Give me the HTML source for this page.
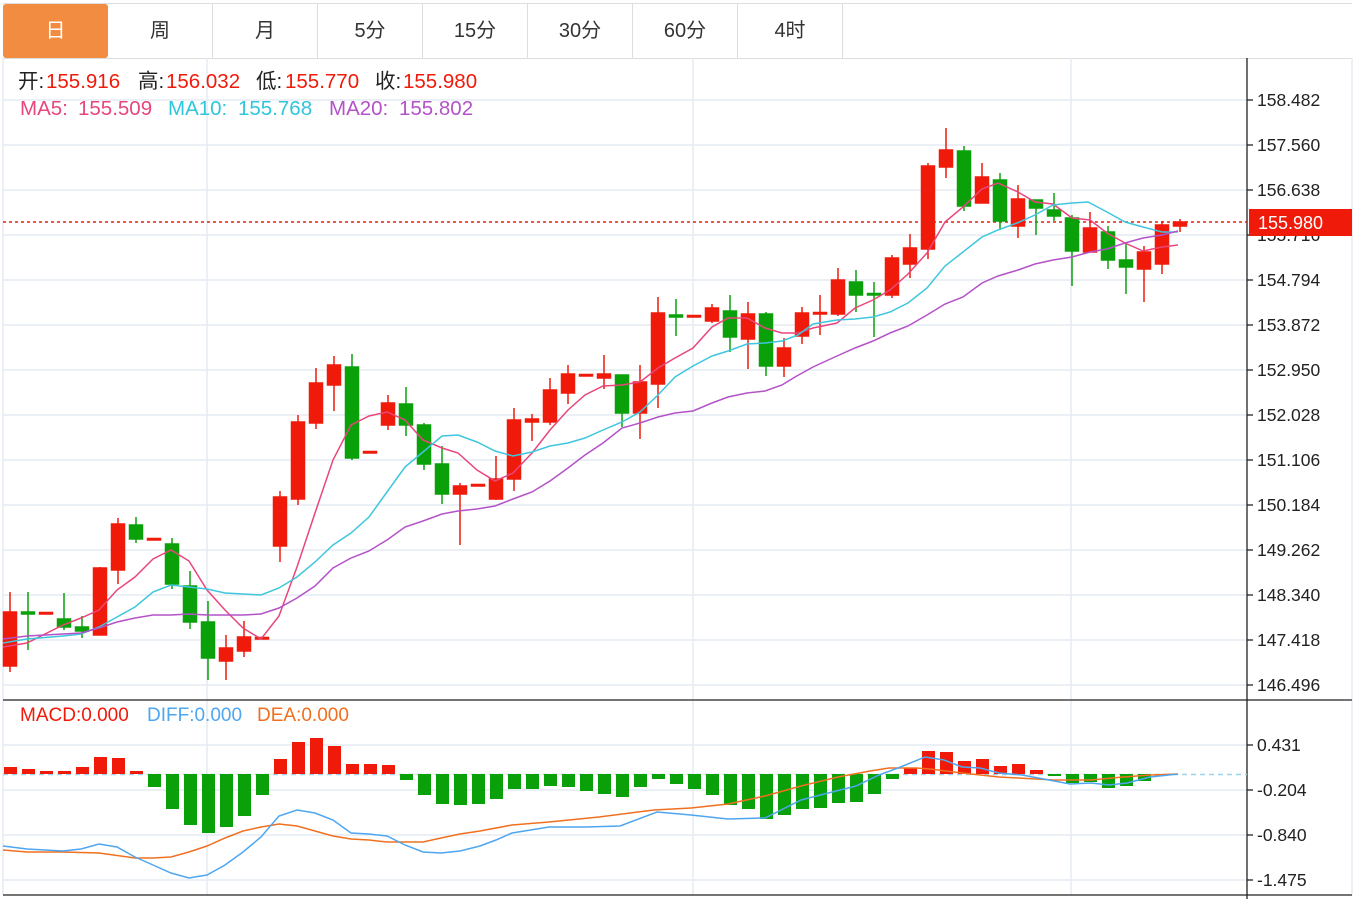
<!DOCTYPE html>
<html><head><meta charset="utf-8"><style>
html,body{margin:0;padding:0;background:#fff;width:1365px;height:899px;overflow:hidden;font-family:"Liberation Sans","Noto Sans CJK SC",sans-serif}
.tabs{position:absolute;left:3px;top:3px;height:54px;width:1349px;border-top:1px solid #ddd;border-bottom:1px solid #ddd}
.tab{position:absolute;top:0;height:54px;width:104px;border-right:1px solid #ddd;text-align:center;line-height:54px;font-size:20px;color:#333}
.tab.on{background:#f28c40;color:#fff;border-radius:3px;border-right:none;width:105px}
.l{position:absolute;font-size:20.5px;white-space:nowrap;line-height:24px}
.r{color:#f01a0a}.k{color:#222}
</style></head><body>
<div class="tabs">
<div class="tab on" style="left:0">日</div>
<div class="tab" style="left:105px">周</div>
<div class="tab" style="left:210px">月</div>
<div class="tab" style="left:315px">5分</div>
<div class="tab" style="left:420px">15分</div>
<div class="tab" style="left:525px">30分</div>
<div class="tab" style="left:630px">60分</div>
<div class="tab" style="left:735px">4时</div>
</div>
<svg style="position:absolute;left:0;top:0" width="1365" height="899" xmlns="http://www.w3.org/2000/svg">
<g stroke="#e4ecf2" stroke-width="1.5">
<line x1="3" x2="1247" y1="100" y2="100"/><line x1="3" x2="1247" y1="145" y2="145"/><line x1="3" x2="1247" y1="190" y2="190"/><line x1="3" x2="1247" y1="235" y2="235"/><line x1="3" x2="1247" y1="280" y2="280"/><line x1="3" x2="1247" y1="325" y2="325"/><line x1="3" x2="1247" y1="370" y2="370"/><line x1="3" x2="1247" y1="415" y2="415"/><line x1="3" x2="1247" y1="460" y2="460"/><line x1="3" x2="1247" y1="505" y2="505"/><line x1="3" x2="1247" y1="550" y2="550"/><line x1="3" x2="1247" y1="595" y2="595"/><line x1="3" x2="1247" y1="640" y2="640"/><line x1="3" x2="1247" y1="685" y2="685"/>
<line x1="3" x2="1247" y1="745" y2="745"/><line x1="3" x2="1247" y1="790" y2="790"/><line x1="3" x2="1247" y1="835" y2="835"/><line x1="3" x2="1247" y1="880" y2="880"/>
<line x1="207" x2="207" y1="58" y2="895"/><line x1="693" x2="693" y1="58" y2="895"/><line x1="1071" x2="1071" y1="58" y2="895"/>
<line x1="3" x2="3" y1="58" y2="895"/><line x1="1352" x2="1352" y1="58" y2="895"/>
</g>
<g stroke="#222" stroke-width="1.3">
<line x1="1247" x2="1247" y1="58" y2="899"/><line x1="3" x2="1352" y1="700" y2="700"/><line x1="3" x2="1352" y1="895" y2="895"/>
<line x1="1247" x2="1253" y1="100" y2="100"/><line x1="1247" x2="1253" y1="145" y2="145"/><line x1="1247" x2="1253" y1="190" y2="190"/><line x1="1247" x2="1253" y1="235" y2="235"/><line x1="1247" x2="1253" y1="280" y2="280"/><line x1="1247" x2="1253" y1="325" y2="325"/><line x1="1247" x2="1253" y1="370" y2="370"/><line x1="1247" x2="1253" y1="415" y2="415"/><line x1="1247" x2="1253" y1="460" y2="460"/><line x1="1247" x2="1253" y1="505" y2="505"/><line x1="1247" x2="1253" y1="550" y2="550"/><line x1="1247" x2="1253" y1="595" y2="595"/><line x1="1247" x2="1253" y1="640" y2="640"/><line x1="1247" x2="1253" y1="685" y2="685"/>
<line x1="1247" x2="1253" y1="745" y2="745"/><line x1="1247" x2="1253" y1="790" y2="790"/><line x1="1247" x2="1253" y1="835" y2="835"/><line x1="1247" x2="1253" y1="880" y2="880"/>
</g>
<g font-family="Liberation Sans,sans-serif" font-size="17.5" fill="#222">
<text x="1257" y="106">158.482</text><text x="1257" y="151">157.560</text><text x="1257" y="196">156.638</text><text x="1257" y="241">155.716</text><text x="1257" y="286">154.794</text><text x="1257" y="331">153.872</text><text x="1257" y="376">152.950</text><text x="1257" y="421">152.028</text><text x="1257" y="466">151.106</text><text x="1257" y="511">150.184</text><text x="1257" y="556">149.262</text><text x="1257" y="601">148.340</text><text x="1257" y="646">147.418</text><text x="1257" y="691">146.496</text>
<text x="1257" y="751">0.431</text><text x="1257" y="796">-0.204</text><text x="1257" y="841">-0.840</text><text x="1257" y="886">-1.475</text>
</g>
<line x1="3" x2="1247" y1="222" y2="222" stroke="#f01a0a" stroke-width="1.5" stroke-dasharray="3,3"/>
<rect x="1249" y="209" width="103" height="27" fill="#f01a0a"/>
<text x="1258" y="229" font-family="Liberation Sans,sans-serif" font-size="18" fill="#fff">155.980</text>
<line x1="3" x2="1247" y1="774.5" y2="774.5" stroke="#9bd4ee" stroke-width="1.5" stroke-dasharray="5,4"/>
<g stroke="#f01a0a" stroke-width="1.5" fill="#f01a0a">
<line x1="10" x2="10" y1="592" y2="672"/><rect x="3.5" y="612" width="13" height="54"/>
<line x1="46" x2="46" y1="613" y2="614"/><rect x="39.5" y="612.5" width="13" height="1.5"/>
<line x1="100" x2="100" y1="567" y2="635"/><rect x="93.5" y="568" width="13" height="67"/>
<line x1="118" x2="118" y1="518" y2="584"/><rect x="111.5" y="524" width="13" height="46"/>
<rect x="147.5" y="538.5" width="13" height="1.5"/>
<line x1="226" x2="226" y1="635" y2="680"/><rect x="219.5" y="648" width="13" height="13"/>
<line x1="244" x2="244" y1="621" y2="657"/><rect x="237.5" y="637" width="13" height="14"/>
<rect x="255.5" y="637.5" width="13" height="1.5"/>
<line x1="280" x2="280" y1="491" y2="562"/><rect x="273.5" y="497" width="13" height="49"/>
<line x1="298" x2="298" y1="415" y2="505"/><rect x="291.5" y="422" width="13" height="77"/>
<line x1="316" x2="316" y1="368" y2="429"/><rect x="309.5" y="383" width="13" height="40"/>
<line x1="334" x2="334" y1="356" y2="411"/><rect x="327.5" y="365" width="13" height="20"/>
<rect x="363.5" y="451.5" width="13" height="1.5"/>
<line x1="388" x2="388" y1="395" y2="430"/><rect x="381.5" y="403" width="13" height="22"/>
<line x1="460" x2="460" y1="483" y2="545"/><rect x="453.5" y="486" width="13" height="8"/>
<rect x="471.5" y="484.5" width="13" height="1.5"/>
<line x1="496" x2="496" y1="456" y2="500"/><rect x="489.5" y="479" width="13" height="20"/>
<line x1="514" x2="514" y1="408" y2="491"/><rect x="507.5" y="420" width="13" height="59"/>
<line x1="532" x2="532" y1="414" y2="441"/><rect x="525.5" y="419" width="13" height="3"/>
<line x1="550" x2="550" y1="378" y2="425"/><rect x="543.5" y="390" width="13" height="32"/>
<line x1="568" x2="568" y1="365" y2="404"/><rect x="561.5" y="374" width="13" height="19"/>
<rect x="579.5" y="374.5" width="13" height="1.5"/>
<line x1="604" x2="604" y1="355" y2="389"/><rect x="597.5" y="374" width="13" height="4"/>
<line x1="640" x2="640" y1="365" y2="439"/><rect x="633.5" y="382" width="13" height="31"/>
<line x1="658" x2="658" y1="297" y2="408"/><rect x="651.5" y="313" width="13" height="71"/>
<rect x="687.5" y="315.5" width="13" height="1.5"/>
<line x1="712" x2="712" y1="304" y2="323"/><rect x="705.5" y="308" width="13" height="13"/>
<line x1="748" x2="748" y1="302" y2="369"/><rect x="741.5" y="314" width="13" height="25"/>
<line x1="784" x2="784" y1="338" y2="377"/><rect x="777.5" y="348" width="13" height="18"/>
<line x1="802" x2="802" y1="307" y2="344"/><rect x="795.5" y="313" width="13" height="23"/>
<line x1="820" x2="820" y1="295" y2="335"/><rect x="813.5" y="312.5" width="13" height="1.5"/>
<line x1="838" x2="838" y1="268" y2="316"/><rect x="831.5" y="280" width="13" height="34"/>
<line x1="892" x2="892" y1="255" y2="298"/><rect x="885.5" y="258" width="13" height="37"/>
<line x1="910" x2="910" y1="234" y2="278"/><rect x="903.5" y="248" width="13" height="16"/>
<line x1="928" x2="928" y1="163" y2="259"/><rect x="921.5" y="166" width="13" height="83"/>
<line x1="946" x2="946" y1="128" y2="178"/><rect x="939.5" y="150" width="13" height="17"/>
<line x1="982" x2="982" y1="163" y2="203"/><rect x="975.5" y="177" width="13" height="26"/>
<line x1="1018" x2="1018" y1="185" y2="238"/><rect x="1011.5" y="199" width="13" height="27"/>
<line x1="1090" x2="1090" y1="212" y2="252"/><rect x="1083.5" y="228" width="13" height="24"/>
<line x1="1144" x2="1144" y1="246" y2="302"/><rect x="1137.5" y="252" width="13" height="17"/>
<line x1="1162" x2="1162" y1="221" y2="274"/><rect x="1155.5" y="225" width="13" height="39"/>
<line x1="1180" x2="1180" y1="219" y2="232"/><rect x="1173.5" y="222" width="13" height="4"/>
</g>
<g stroke="#0aa00a" stroke-width="1.5" fill="#0aa00a">
<line x1="28" x2="28" y1="592" y2="650"/><rect x="21.5" y="612" width="13" height="2"/>
<line x1="64" x2="64" y1="593" y2="630"/><rect x="57.5" y="619" width="13" height="8"/>
<line x1="82" x2="82" y1="616" y2="638"/><rect x="75.5" y="627" width="13" height="4"/>
<line x1="136" x2="136" y1="517" y2="543"/><rect x="129.5" y="525" width="13" height="14"/>
<line x1="172" x2="172" y1="538" y2="589"/><rect x="165.5" y="544" width="13" height="40"/>
<line x1="190" x2="190" y1="571" y2="629"/><rect x="183.5" y="586" width="13" height="36"/>
<line x1="208" x2="208" y1="601" y2="680"/><rect x="201.5" y="622" width="13" height="36"/>
<line x1="352" x2="352" y1="354" y2="460"/><rect x="345.5" y="367" width="13" height="91"/>
<line x1="406" x2="406" y1="387" y2="436"/><rect x="399.5" y="404" width="13" height="21"/>
<line x1="424" x2="424" y1="423" y2="470"/><rect x="417.5" y="425" width="13" height="39"/>
<line x1="442" x2="442" y1="446" y2="504"/><rect x="435.5" y="464" width="13" height="30"/>
<line x1="622" x2="622" y1="375" y2="427"/><rect x="615.5" y="375" width="13" height="38"/>
<line x1="676" x2="676" y1="299" y2="336"/><rect x="669.5" y="315" width="13" height="2"/>
<line x1="730" x2="730" y1="295" y2="352"/><rect x="723.5" y="311" width="13" height="26"/>
<line x1="766" x2="766" y1="312" y2="376"/><rect x="759.5" y="314" width="13" height="52"/>
<line x1="856" x2="856" y1="270" y2="312"/><rect x="849.5" y="282" width="13" height="13"/>
<line x1="874" x2="874" y1="282" y2="337"/><rect x="867.5" y="293.5" width="13" height="1.5"/>
<line x1="964" x2="964" y1="146" y2="211"/><rect x="957.5" y="151" width="13" height="55"/>
<line x1="1000" x2="1000" y1="173" y2="230"/><rect x="993.5" y="180" width="13" height="41"/>
<line x1="1036" x2="1036" y1="200" y2="235"/><rect x="1029.5" y="200" width="13" height="8"/>
<line x1="1054" x2="1054" y1="193" y2="221"/><rect x="1047.5" y="210" width="13" height="6"/>
<line x1="1072" x2="1072" y1="215" y2="286"/><rect x="1065.5" y="218" width="13" height="33"/>
<line x1="1108" x2="1108" y1="226" y2="269"/><rect x="1101.5" y="232" width="13" height="28"/>
<line x1="1126" x2="1126" y1="243" y2="294"/><rect x="1119.5" y="260" width="13" height="7"/>
</g>
<g fill="none" stroke-width="1.5">
<polyline stroke="#e8467c" points="3,647 27,643 63,625 81,618 99,610 117,590 135,577 153,559 171,550 189,561 207,590 225,610 243,628 261,639 279,616 297,567 315,513 333,460 351,425 369,416 387,412 405,420 423,440 442,448 458,453 477,470 495,481 513,473 532,453 550,430 568,410 585,395 603,386 622,385 640,382 658,368 675,358 693,348 712,327 728,318 747,318 765,328 782,333 798,333 813,328 837,323 855,308 873,300 890,290 908,274 927,253 945,222 963,207 982,189 998,183 1018,192 1035,202 1053,204 1072,218 1090,220 1107,233 1125,243 1143,251 1162,247 1178,245"/>
<polyline stroke="#3fc6de" points="3,643 27,639 63,636 81,634 99,627 117,617 135,607 153,592 171,585 189,587 207,589 225,593 243,594 261,595 279,588 297,577 315,562 333,545 351,533 369,517 387,492 405,467 423,452 442,436 458,435 477,442 495,451 513,456 532,452 550,446 568,443 585,438 603,430 622,422 640,412 658,395 675,377 693,366 712,356 728,351 747,344 765,343 782,341 798,335 813,324 837,320 855,319 873,317 890,312 908,303 927,288 945,266 963,252 982,237 998,230 1017,223 1035,215 1053,205 1072,203 1088,202 1107,212 1125,222 1143,227 1162,232 1178,232"/>
<polyline stroke="#b452c8" points="3,639 27,636 63,634 81,633 99,628 117,622 135,618 153,615 171,615 189,614 207,615 225,615 243,615 261,614 279,608 297,598 315,586 333,568 351,558 369,551 387,540 405,527 423,521 442,514 458,511 477,509 495,506 513,499 532,492 550,481 568,468 585,455 603,443 622,428 640,423 658,417 675,413 693,411 712,403 728,397 747,393 765,391 782,385 795,377 813,367 837,356 855,348 873,341 890,333 908,326 927,315 945,304 963,297 982,283 998,276 1018,270 1035,264 1053,260 1072,257 1090,252 1107,249 1125,243 1143,238 1162,235 1178,231"/>
</g>
<g fill="#f01a0a">
<rect x="4" y="767" width="13" height="7"/><rect x="22" y="769" width="13" height="5"/><rect x="40" y="771" width="13" height="3"/><rect x="58" y="771" width="13" height="3"/><rect x="76" y="767" width="13" height="7"/><rect x="94" y="757" width="13" height="17"/><rect x="112" y="758" width="13" height="16"/><rect x="130" y="771" width="13" height="3"/>
<rect x="274" y="759" width="13" height="15"/><rect x="292" y="742" width="13" height="32"/><rect x="310" y="738" width="13" height="36"/><rect x="328" y="746" width="13" height="28"/><rect x="346" y="764" width="13" height="10"/><rect x="364" y="764" width="13" height="10"/><rect x="382" y="765" width="13" height="9"/>
<rect x="904" y="768" width="13" height="6"/><rect x="922" y="751" width="13" height="23"/><rect x="940" y="752" width="13" height="22"/><rect x="958" y="761" width="13" height="13"/><rect x="976" y="759" width="13" height="15"/><rect x="994" y="766" width="13" height="8"/><rect x="1012" y="764" width="13" height="10"/><rect x="1030" y="770" width="13" height="4"/>
</g>
<g fill="#0aa00a">
<rect x="148" y="774" width="13" height="13"/><rect x="166" y="774" width="13" height="35"/><rect x="184" y="774" width="13" height="51"/><rect x="202" y="774" width="13" height="59"/><rect x="220" y="774" width="13" height="53"/><rect x="238" y="774" width="13" height="42"/><rect x="256" y="774" width="13" height="21"/>
<rect x="400" y="774" width="13" height="6"/><rect x="418" y="774" width="13" height="21"/><rect x="436" y="774" width="13" height="30"/><rect x="454" y="774" width="13" height="31"/><rect x="472" y="774" width="13" height="30"/><rect x="490" y="774" width="13" height="25"/><rect x="508" y="774" width="13" height="15"/><rect x="526" y="774" width="13" height="15"/><rect x="544" y="774" width="13" height="12"/><rect x="562" y="774" width="13" height="13"/><rect x="580" y="774" width="13" height="17"/><rect x="598" y="774" width="13" height="20"/><rect x="616" y="774" width="13" height="23"/><rect x="634" y="774" width="13" height="13"/><rect x="652" y="774" width="13" height="5"/><rect x="670" y="774" width="13" height="10"/><rect x="688" y="774" width="13" height="15"/><rect x="706" y="774" width="13" height="21"/><rect x="724" y="774" width="13" height="31"/><rect x="742" y="774" width="13" height="35"/><rect x="760" y="774" width="13" height="45"/><rect x="778" y="774" width="13" height="41"/><rect x="796" y="774" width="13" height="35"/><rect x="814" y="774" width="13" height="34"/><rect x="832" y="774" width="13" height="29"/><rect x="850" y="774" width="13" height="28"/><rect x="868" y="774" width="13" height="20"/><rect x="886" y="774" width="13" height="5"/>
<rect x="1048" y="774" width="13" height="2"/><rect x="1066" y="774" width="13" height="9"/><rect x="1084" y="774" width="13" height="8"/><rect x="1102" y="774" width="13" height="14"/><rect x="1120" y="774" width="13" height="12"/><rect x="1138" y="774" width="13" height="7"/>
</g>
<g fill="none" stroke-width="1.5">
<polyline stroke="#f07020" points="3,850 27,852 63,852 99,853 135,858 153,858 171,857 189,852 207,846 225,838 243,831 261,827 279,824 297,826 315,831 333,836 351,839 369,840 387,842 405,842 423,842 441,838 460,834 480,831 512,825 549,822 599,817 654,810 691,808 728,804 765,796 801,786 838,777 870,771 889,768 916,768 930,769 962,773 999,777 1054,780 1091,780 1123,777 1150,775 1178,774"/>
<polyline stroke="#4ea6f0" points="3,846 27,849 63,851 81,849 99,844 117,847 135,857 153,865 171,873 189,878 207,875 225,865 243,852 261,837 279,816 297,810 315,813 333,820 351,833 369,834 387,836 405,845 423,852 441,853 460,851 480,846 496,840 512,833 549,827 586,827 620,826 657,812 691,815 728,819 765,818 801,800 836,791 856,786 879,775 898,768 925,757 944,760 962,767 980,768 999,773 1022,775 1049,780 1070,784 1091,783 1109,785 1127,783 1150,777 1178,774"/>
</g>
</svg>
<div class="l k" style="left:18px;top:70px">开:</div><div class="l r" style="left:46px;top:70px">155.916</div>
<div class="l k" style="left:138px;top:70px">高:</div><div class="l r" style="left:166px;top:70px">156.032</div>
<div class="l k" style="left:256px;top:70px">低:</div><div class="l r" style="left:285px;top:70px">155.770</div>
<div class="l k" style="left:375px;top:70px">收:</div><div class="l r" style="left:403px;top:70px">155.980</div>
<div class="l" style="left:20px;top:97px;color:#e8467c">MA5:</div><div class="l" style="left:78px;top:97px;color:#e8467c">155.509</div>
<div class="l" style="left:168px;top:97px;color:#2fc6dc">MA10:</div><div class="l" style="left:238px;top:97px;color:#2fc6dc">155.768</div>
<div class="l" style="left:329px;top:97px;color:#b452c8">MA20:</div><div class="l" style="left:399px;top:97px;color:#b452c8">155.802</div>
<div class="l r" style="left:20px;top:704px;font-size:19px">MACD:0.000</div>
<div class="l" style="left:147px;top:704px;font-size:19px;color:#4ea6f0">DIFF:0.000</div>
<div class="l" style="left:257px;top:704px;font-size:19px;color:#f07020">DEA:0.000</div>
</body></html>
